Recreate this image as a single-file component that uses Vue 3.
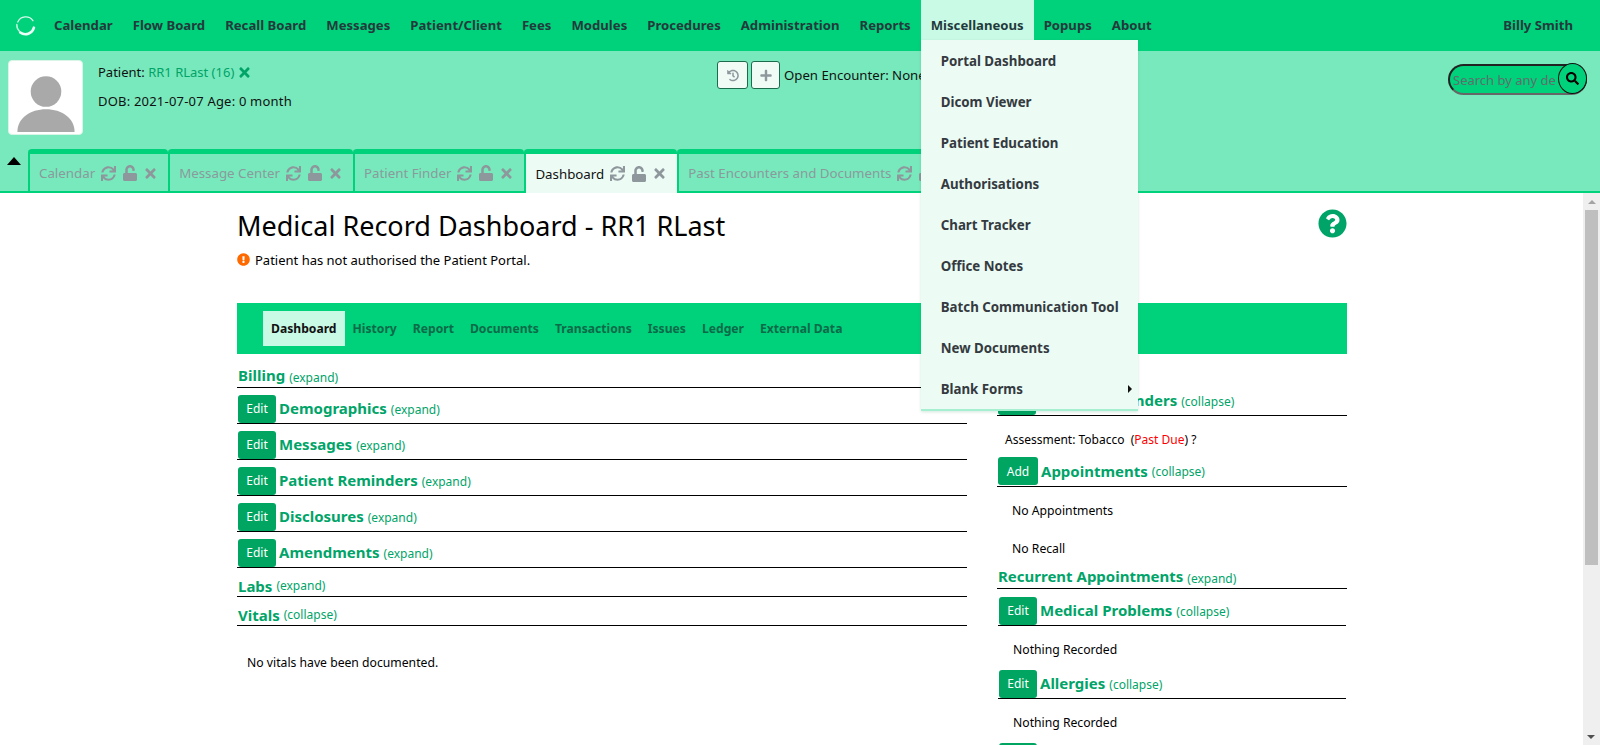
<script setup>
const icons = {
  times: { box: '0 0 352 512', d: 'M242.72 256l100.07-100.07c12.28-12.28 12.28-32.19 0-44.48l-22.24-22.24c-12.28-12.28-32.19-12.28-44.48 0L176 189.28 75.93 89.21c-12.28-12.28-32.19-12.28-44.48 0L9.21 111.45c-12.28 12.28-12.28 32.19 0 44.48L109.28 256 9.21 356.07c-12.28 12.28-12.28 32.19 0 44.48l22.24 22.24c12.28 12.28 32.2 12.28 44.48 0L176 322.72l100.07 100.07c12.28 12.28 32.2 12.28 44.48 0l22.24-22.24c12.28-12.28 12.28-32.19 0-44.48L242.72 256z' },
  sync: { box: '0 0 512 512', d: 'M440.65 12.57l4 82.77A247.16 247.16 0 0 0 255.83 8C134.73 8 33.91 94.92 12.29 209.82A12 12 0 0 0 24.09 224h49.05a12 12 0 0 0 11.67-9.26 175.91 175.91 0 0 1 317-56.94l-101.46-4.86a12 12 0 0 0-12.57 12v47.41a12 12 0 0 0 12 12H500a12 12 0 0 0 12-12V12a12 12 0 0 0-12-12h-47.37a12 12 0 0 0-11.98 12.57zM255.83 432a175.61 175.61 0 0 1-146-77.8l101.8 4.87a12 12 0 0 0 12.57-12v-47.4a12 12 0 0 0-12-12H12a12 12 0 0 0-12 12V500a12 12 0 0 0 12 12h47.35a12 12 0 0 0 12-12.6l-4.15-82.57A247.17 247.17 0 0 0 255.83 504c121.11 0 221.93-86.92 243.55-201.82a12 12 0 0 0-11.8-14.18h-49.05a12 12 0 0 0-11.67 9.26A175.86 175.86 0 0 1 255.83 432z' },
  unlock: { box: '0 0 448 512', d: 'M400 256H152V152.9c0-39.6 31.7-72.5 71.3-72.9 40-.4 72.7 32.1 72.7 72v16c0 13.3 10.7 24 24 24h32c13.3 0 24-10.7 24-24v-16C376 68 307.5-.3 223.5 0 139.5.3 72 69.5 72 153.5V256H48c-26.5 0-48 21.5-48 48v160c0 26.5 21.5 48 48 48h352c26.5 0 48-21.5 48-48V304c0-26.5-21.5-48-48-48z' },
  search: { box: '0 0 512 512', d: 'M505 442.7L405.3 343c-4.5-4.5-10.6-7-17-7H372c27.6-35.3 44-79.7 44-128C416 93.1 322.9 0 208 0S0 93.1 0 208s93.1 208 208 208c48.3 0 92.7-16.4 128-44v16.3c0 6.4 2.5 12.5 7 17l99.7 99.7c9.4 9.4 24.6 9.4 33.9 0l28.3-28.3c9.4-9.4 9.4-24.6.1-34zM208 336c-70.7 0-128-57.2-128-128 0-70.7 57.2-128 128-128 70.7 0 128 57.2 128 128 0 70.7-57.2 128-128 128z' },
  plus: { box: '0 0 448 512', d: 'M416 208H272V64c0-17.67-14.33-32-32-32h-32c-17.67 0-32 14.33-32 32v144H32c-17.67 0-32 14.33-32 32v32c0 17.67 14.33 32 32 32h144v144c0 17.67 14.33 32 32 32h32c17.67 0 32-14.33 32-32V304h144c17.67 0 32-14.33 32-32v-32c0-17.67-14.33-32-32-32z' },
  history: { box: '0 0 512 512', d: 'M504 255.531c.253 136.64-111.18 248.372-247.82 248.468-59.015.042-113.223-20.53-155.822-54.911-11.077-8.94-11.905-25.541-1.839-35.607l11.267-11.267c8.609-8.609 22.353-9.551 31.891-1.984C173.062 425.135 212.781 440 256 440c101.705 0 184-82.311 184-184 0-101.705-82.311-184-184-184-48.814 0-93.149 18.969-126.068 49.932l50.754 50.754c10.08 10.08 2.941 27.314-11.313 27.314H24c-8.837 0-16-7.163-16-16V38.627c0-14.254 17.234-21.393 27.314-11.314l49.372 49.372C129.209 34.136 189.552 8 256 8c136.81 0 247.747 110.78 248 247.531zm-180.912 78.784l9.823-12.63c8.138-10.463 6.253-25.542-4.21-33.679L288 256.349V152c0-13.255-10.745-24-24-24h-16c-13.255 0-24 10.745-24 24v135.651l65.409 50.874c10.463 8.137 25.541 6.253 33.679-4.21z' },
  question: { box: '0 0 512 512', d: 'M504 256c0 136.997-111.043 248-248 248S8 392.997 8 256C8 119.083 119.043 8 256 8s248 111.083 248 248zM262.655 90c-54.497 0-89.255 22.957-116.549 63.758-3.536 5.286-2.353 12.415 2.715 16.258l34.699 26.31c5.205 3.947 12.621 3.008 16.665-2.122 17.864-22.658 30.113-35.797 57.303-35.797 20.429 0 45.698 13.148 45.698 32.958 0 14.976-12.363 22.667-32.534 33.976C247.128 238.528 216 254.941 216 296v4c0 6.627 5.373 12 12 12h56c6.627 0 12-5.373 12-12v-1.333c0-28.462 83.186-29.647 83.186-106.667 0-58.002-60.165-102-116.531-102zM256 338c-25.365 0-46 20.635-46 46 0 25.364 20.635 46 46 46s46-20.636 46-46c0-25.365-20.635-46-46-46z' },
  alert: { box: '0 0 512 512', d: 'M504 256c0 136.997-111.043 248-248 248S8 392.997 8 256C8 119.083 119.043 8 256 8s248 111.083 248 248zm-248 50c-25.405 0-46 20.595-46 46s20.595 46 46 46 46-20.595 46-46-20.595-46-46-46zm-43.673-165.346l7.418 136c.347 6.364 5.609 11.346 11.982 11.346h48.546c6.373 0 11.635-4.982 11.982-11.346l7.418-136c.375-6.874-5.098-12.654-11.982-12.654h-63.383c-6.884 0-12.356 5.78-11.981 12.654z' },
};

const navItems = ['Calendar', 'Flow Board', 'Recall Board', 'Messages', 'Patient/Client', 'Fees', 'Modules', 'Procedures', 'Administration', 'Reports'];
const menuItems = ['Portal Dashboard', 'Dicom Viewer', 'Patient Education', 'Authorisations', 'Chart Tracker', 'Office Notes', 'Batch Communication Tool', 'New Documents', 'Blank Forms'];
const tabs = [
  { name: 'Calendar' },
  { name: 'Message Center' },
  { name: 'Patient Finder' },
  { name: 'Dashboard', active: true },
  { name: 'Past Encounters and Documents' },
];
const subTabs = ['Dashboard', 'History', 'Report', 'Documents', 'Transactions', 'Issues', 'Ledger', 'External Data'];
const leftSections = [
  { title: 'Billing', toggle: 'expand', first: true },
  { title: 'Demographics', toggle: 'expand', btn: 'Edit' },
  { title: 'Messages', toggle: 'expand', btn: 'Edit' },
  { title: 'Patient Reminders', toggle: 'expand', btn: 'Edit' },
  { title: 'Disclosures', toggle: 'expand', btn: 'Edit' },
  { title: 'Amendments', toggle: 'expand', btn: 'Edit' },
  { title: 'Labs', toggle: 'expand' },
  { title: 'Vitals', toggle: 'collapse' },
];
</script>

<template>
  <div class="page">
    <nav class="topbar">
      <svg class="logo" viewBox="0 0 24 24" fill="none" stroke-linecap="round">
        <path d="M3.2 8A10 10 0 0 1 20.5 6.5" stroke="#d8fbec" stroke-width="1.5" />
        <path d="M21.6 14.5A10 10 0 0 1 6 20" stroke="#eafff6" stroke-width="3" />
        <path d="M5 18.5A10 10 0 0 1 2.1 11" stroke="#b8f5da" stroke-width="1.8" />
      </svg>
      <a v-for="item in navItems" :key="item" class="nav-link">{{ item }}</a>
      <div class="nav-open">
        <a class="nav-link nav-link--open">Miscellaneous</a>
        <ul class="dropdown">
          <li v-for="item in menuItems" :key="item">
            {{ item }}
            <span v-if="item === 'Blank Forms'" class="sub-caret"></span>
          </li>
        </ul>
      </div>
      <a class="nav-link">Popups</a>
      <a class="nav-link">About</a>
      <a class="nav-link nav-user">Billy Smith</a>
    </nav>

    <header class="patient-bar">
      <div class="patient-row">
        <div class="avatar">
          <svg viewBox="0 0 72 74" width="72" height="73">
            <circle cx="37" cy="31" r="15.5" fill="#a9a9a9" />
            <path d="M8 72c0-14 13-23 29-23s29 9 29 23z" fill="#a9a9a9" />
          </svg>
        </div>
        <div class="patient-info">
          <div>Patient: <span class="patient-name">RR1 RLast (16)</span>
            <svg class="ic patient-x" :viewBox="icons.times.box"><path :d="icons.times.d" /></svg>
          </div>
          <div class="patient-dob">DOB: 2021-07-07 Age: 0 month</div>
        </div>
        <div class="encounter">
          <button class="enc-btn enc-btn--history"><svg class="ic" :viewBox="icons.history.box"><path :d="icons.history.d" /></svg></button>
          <button class="enc-btn"><svg class="ic" :viewBox="icons.plus.box"><path :d="icons.plus.d" /></svg></button>
          <span class="enc-text">Open Encounter: None</span>
        </div>
        <div class="search">
          <input class="search-input" placeholder="Search by any demographics" />
          <button class="search-btn"><svg class="ic" :viewBox="icons.search.box"><path :d="icons.search.d" /></svg></button>
        </div>
      </div>
      <div class="tabs-row">
        <span class="collapse-caret"></span>
        <div v-for="tab in tabs" :key="tab.name" class="tab" :class="{ 'tab--active': tab.active }">
          <span>{{ tab.name }}</span>
          <svg class="ic tab-ic" :viewBox="icons.sync.box"><path :d="icons.sync.d" /></svg>
          <svg class="ic tab-ic tab-lock" :viewBox="icons.unlock.box"><path :d="icons.unlock.d" /></svg>
          <svg class="ic tab-ic tab-x" :viewBox="icons.times.box"><path :d="icons.times.d" /></svg>
        </div>
      </div>
    </header>

    <div class="body-row">
      <main class="content">
        <div class="title-row">
          <h1 class="title">Medical Record Dashboard - RR1 RLast</h1>
          <svg class="help" :viewBox="icons.question.box"><path :d="icons.question.d" /></svg>
        </div>
        <p class="portal-note">
          <svg class="note-ic" :viewBox="icons.alert.box"><path :d="icons.alert.d" /></svg>
          Patient has not authorised the Patient Portal.
        </p>

        <div class="subnav">
          <a v-for="(t, i) in subTabs" :key="t" class="subnav-link" :class="{ 'subnav-link--active': i === 0 }">{{ t }}</a>
        </div>

        <div class="columns">
          <section class="col-left">
            <div v-for="s in leftSections" :key="s.title" class="sec" :class="{ 'sec--btn': s.btn, 'sec--lift': s.first }">
              <button v-if="s.btn" class="sec-btn">{{ s.btn }}</button>
              <span class="sec-title">{{ s.title }}</span>
              <span class="sec-toggle">({{ s.toggle }})</span>
            </div>
            <p class="no-vitals">No vitals have been documented.</p>
          </section>

          <section class="col-right">
            <div class="sec sec--btn sec--top">
              <button class="sec-btn">Edit</button>
              <span class="sec-title">Clinical Reminders</span>
              <span class="sec-toggle">(collapse)</span>
            </div>
            <p class="r-text r-text--assess">Assessment: Tobacco &nbsp;(<span class="past-due">Past Due</span>) ?</p>
            <div class="sec sec--btn sec--add">
              <button class="sec-btn sec-btn--add">Add</button>
              <span class="sec-title">Appointments</span>
              <span class="sec-toggle">(collapse)</span>
            </div>
            <p class="r-text r-text--appt">No Appointments</p>
            <p class="r-text r-text--recall">No Recall</p>
            <div class="sec sec--lift sec--recurrent">
              <span class="sec-title">Recurrent Appointments</span>
              <span class="sec-toggle">(expand)</span>
            </div>
            <div class="sec sec--btn sec--inset">
              <button class="sec-btn">Edit</button>
              <span class="sec-title">Medical Problems</span>
              <span class="sec-toggle">(collapse)</span>
            </div>
            <p class="r-text r-text--none">Nothing Recorded</p>
            <div class="sec sec--btn sec--inset">
              <button class="sec-btn">Edit</button>
              <span class="sec-title">Allergies</span>
              <span class="sec-toggle">(collapse)</span>
            </div>
            <p class="r-text r-text--none">Nothing Recorded</p>
            <div class="sec sec--btn sec--inset">
              <button class="sec-btn"></button>
            </div>
          </section>
        </div>
      </main>

      <div class="scrollbar">
        <span class="sb-up"></span>
        <div class="sb-thumb"></div>
        <span class="sb-down"></span>
      </div>
    </div>
  </div>
</template>

<style>
html, body { margin: 0; height: 100%; overflow: hidden; background: #fff; }
</style>

<style scoped>
* { box-sizing: border-box; }

.page {
  height: 745px;
  display: flex;
  flex-direction: column;
  font-family: "Noto Sans", "Open Sans", sans-serif;
  font-size: 13px;
  color: #111;
  overflow: hidden;
}

.ic { display: inline-block; fill: currentColor; }

/* top nav */
.topbar {
  height: 51px;
  flex: none;
  display: flex;
  align-items: flex-start;
  background: #00d17b;
  padding-left: 15px;
  position: relative;
  z-index: 5;
}

.logo { width: 21px; height: 21px; margin: 15px 8px 0 0; flex: none; }

.nav-link {
  padding: 0 10px;
  height: 51px;
  line-height: 51px;
  font-size: 13.15px;
  font-weight: 700;
  color: #233a3c;
  white-space: nowrap;
}

.nav-open { position: relative; }

.nav-link--open {
  display: block;
  height: 41px;
  background: #c9fae6;
}

.nav-user { margin-left: auto; margin-right: 17px; }

.dropdown {
  position: absolute;
  top: 40px;
  left: 0;
  width: 217px;
  height: 371px;
  margin: 0;
  padding: 1px 0 0;
  list-style: none;
  background: #ecfbf4;
  border-bottom: 2px solid #a6f0d1;
  box-shadow: 0 1px 3px rgba(0, 120, 70, 0.18);
}

.dropdown li {
  position: relative;
  height: 41px;
  line-height: 41px;
  padding-left: 20px;
  font-size: 13.3px;
  font-weight: 700;
  color: #343a40;
  white-space: nowrap;
}

.sub-caret {
  position: absolute;
  right: 6px;
  top: 16px;
  border-left: 4px solid #111;
  border-top: 4px solid transparent;
  border-bottom: 4px solid transparent;
}

/* patient bar */
.patient-bar {
  height: 142px;
  flex: none;
  display: flex;
  flex-direction: column;
  background: #78e9bc;
  border-bottom: 2px solid #00d17b;
}

.patient-row {
  height: 98px;
  flex: none;
  display: flex;
  align-items: flex-start;
  padding: 8px 13px 0 8px;
}

.avatar {
  width: 75px;
  height: 75px;
  flex: none;
  margin-top: 1px;
  display: flex;
  align-items: flex-end;
  background: #fff;
  border: 1px solid #d8f5e8;
  border-radius: 4px;
}

.patient-info {
  width: 300px;
  margin-left: 15px;
  padding-top: 4px;
  line-height: 18px;
}

.patient-name { color: #00a468; }

.patient-x { width: 11px; height: 15px; color: #00a468; vertical-align: -3px; margin-left: 5px; }

.patient-dob { margin-top: 11px; letter-spacing: 0.2px; }

.encounter {
  display: flex;
  align-items: center;
  margin-left: 319px;
  margin-top: 2px;
}

.enc-btn {
  width: 29px;
  height: 28px;
  margin-right: 3px;
  padding: 0;
  display: flex;
  align-items: center;
  justify-content: center;
  background: #f0fbf6;
  border: 1px solid #1c6b4c;
  border-radius: 3px;
  color: #8d979c;
}

.enc-btn--history { width: 31px; }

.enc-btn .ic { width: 12px; height: 13px; }

.enc-text { margin-left: 1px; font-size: 13.2px; white-space: nowrap; }

.search {
  margin-left: auto;
  margin-top: 5px;
  width: 139px;
  height: 32px;
  position: relative;
}

.search-input {
  width: 100%;
  height: 31px;
  padding: 0 30px 0 3px;
  background: #00d17b;
  border: 2px solid #222;
  border-bottom-color: #666;
  border-radius: 16px;
  font-family: inherit;
  font-size: 13px;
  outline: none;
}

.search-input::placeholder { color: #5f6f6c; opacity: 1; }

.search-btn {
  position: absolute;
  right: 0;
  top: -1px;
  width: 29px;
  height: 31px;
  padding: 0;
  display: flex;
  align-items: center;
  justify-content: center;
  background: #00d17b;
  border: 1px solid #111;
  border-radius: 50%;
  color: #000;
}

.search-btn .ic { width: 13px; height: 13px; }

.tabs-row {
  flex: 1;
  display: flex;
  align-items: stretch;
  padding-left: 28px;
  position: relative;
}

.collapse-caret {
  position: absolute;
  left: 7px;
  top: 8px;
  border-left: 7.5px solid transparent;
  border-right: 7.5px solid transparent;
  border-bottom: 8px solid #000;
}

.tab {
  display: flex;
  align-items: center;
  flex: none;
  height: 43px;
  padding: 0 8px 0 9px;
  border-top: 5px solid #00d17b;
  border-left: 2px solid #00d17b;
  border-top-left-radius: 4px;
  border-top-right-radius: 4px;
  font-size: 13.3px;
  color: #8a9a9c;
  white-space: nowrap;
}

.tab--active {
  background: #ecfbf4;
  color: #111;
  height: 44px;
  position: relative;
}

.tab-ic { width: 15px; height: 15px; margin-left: 6px; color: #8d979c; }

.tab-lock { width: 14px; height: 16px; margin-left: 7px; }

.tab-x { width: 11px; margin-left: 8px; margin-right: 4px; }

/* page body */
.body-row {
  flex: 1;
  min-height: 0;
  display: flex;
}

.content {
  flex: 1;
  min-width: 0;
  padding-left: 237px;
  padding-right: 236px;
  overflow: hidden;
}

.title-row {
  display: flex;
  justify-content: space-between;
  padding-top: 15px;
  height: 56px;
}

.title {
  margin: 0;
  font-size: 27px;
  line-height: 36px;
  font-weight: 400;
  color: #000;
}

.help { width: 29px; height: 29px; fill: #00a468; margin-top: 1px; }

.portal-note {
  margin: 0;
  height: 54px;
  display: flex;
  align-items: flex-start;
  line-height: 22px;
  color: #000;
}

.note-ic { width: 13px; height: 13px; fill: #ff6a00; margin: 4px 5px 0 0; }

.subnav {
  height: 51px;
  display: flex;
  align-items: center;
  padding-left: 26px;
  background: #00d17b;
}

.subnav-link {
  padding: 0 8px;
  height: 35px;
  line-height: 36px;
  font-size: 12.15px;
  font-weight: 700;
  color: #0b6a48;
  white-space: nowrap;
}

.subnav-link--active { background: #c9fae6; color: #111; }

.columns {
  display: flex;
  gap: 30px;
  align-items: flex-start;
}

.col-left { width: 730px; flex: none; }

.col-right { width: 350px; flex: none; padding-top: 32px; }

.sec {
  height: 29px;
  display: flex;
  align-items: flex-end;
  padding: 0 0 0 1px;
  border-bottom: 1px solid #000;
  white-space: nowrap;
}

.sec--lift { padding-bottom: 2px; }

.sec--lift .sec-toggle { margin-bottom: -3px; }

.col-left .sec--lift { height: 34px; }

.sec--btn {
  height: 36px;
  padding-bottom: 0;
  align-items: center;
  padding-top: 6px;
}

.sec-btn {
  width: 38px;
  height: 28px;
  flex: none;
  margin-right: 3px;
  padding: 0;
  background: #00a562;
  border: 0;
  border-radius: 3px;
  color: #fff;
  font-family: inherit;
  font-size: 12px;
}

.sec-btn--add { width: 40px; }

.sec-title {
  font-size: 15px;
  line-height: 20px;
  font-weight: 700;
  color: #00a468;
}

.sec--btn .sec-title { margin-top: -2px; }

.sec--add .sec-title { margin-top: 0; }

.sec--inset .sec-title { margin-top: -1px; }

.sec-toggle {
  margin-left: 4px;
  font-size: 12px;
  line-height: 20px;
  color: #00a468;
  align-self: flex-end;
}

.sec--btn .sec-toggle { align-self: center; padding-top: 2px; }

.no-vitals { margin: 27px 0 0 10px; line-height: 20px; font-size: 12.2px; color: #000; }

.sec--top { padding-top: 0; height: 30px; }

.r-text { margin: 0; font-size: 12.2px; color: #000; white-space: nowrap; }

.r-text--assess { padding: 14px 0 0 8px; line-height: 20px; height: 35px; font-size: 12px; }

.past-due { color: #f00; }

.sec--add { height: 36px; padding-top: 5px; }

.r-text--appt { padding: 14px 0 0 15px; line-height: 20px; height: 43px; }

.r-text--recall { padding: 9px 0 0 15px; line-height: 20px; height: 30px; }

.sec--recurrent { height: 29px; }

.sec--inset { margin-left: 1px; margin-right: 1px; padding-left: 1px; height: 37px; padding-top: 7px; }

.r-text--none { padding: 14px 0 0 16px; line-height: 20px; height: 36px; }

/* scrollbar */
.scrollbar {
  width: 17px;
  flex: none;
  display: flex;
  flex-direction: column;
  align-items: center;
  background: #efefef;
  position: relative;
}

.sb-up {
  margin-top: 7px;
  border-left: 4px solid transparent;
  border-right: 4px solid transparent;
  border-bottom: 4px solid #a3a3a3;
}

.sb-thumb {
  width: 13px;
  height: 355px;
  margin-top: 6px;
  background: #bfbfbf;
}

.sb-down {
  position: absolute;
  bottom: 6px;
  left: 4px;
  border-left: 4px solid transparent;
  border-right: 4px solid transparent;
  border-top: 4px solid #505050;
}
</style>
